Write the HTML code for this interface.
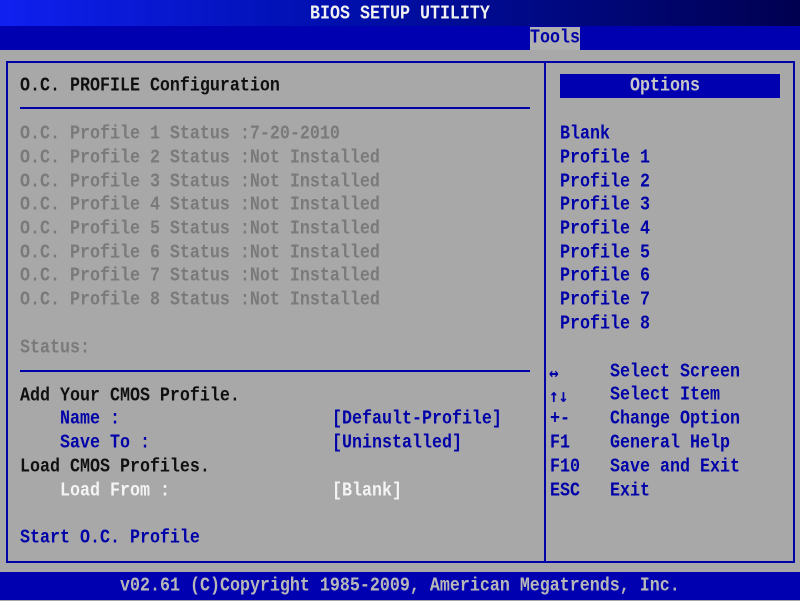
<!DOCTYPE html>
<html><head><meta charset="utf-8"><style>
*{margin:0;padding:0}
body{width:800px;height:600px;overflow:hidden;background:#a8a8a8;position:relative;font-family:"Liberation Mono","DejaVu Sans Mono",monospace;font-size:16.67px;}
.t{position:absolute;line-height:24px;height:24px;white-space:pre;font-weight:bold;transform:scaleY(1.15);transform-origin:left center;margin-top:2px}
.g{color:#7a7a7a}.b{color:#0000a8}.k{color:#101010}.w{color:#f4f4f4}
#top{position:absolute;left:0;top:0;width:800px;height:26px;background:linear-gradient(90deg,#1020f0 0%,#0010b0 40%,#000050 100%)}
#tab{position:absolute;left:0;top:26px;width:800px;height:24px;background:#0000b0}
#box{position:absolute;left:6px;top:61px;width:785px;height:498px;border:2px solid #0000a8}
#div{position:absolute;left:544px;top:61px;width:2px;height:500px;background:#0000a8}
.hl{position:absolute;height:2px;background:#0000a8;left:20px;width:510px}
#opt{position:absolute;left:560px;top:74px;width:220px;height:24px;background:#0000b0}
#bot{position:absolute;left:0;top:572px;width:800px;height:28px;background:#0000b0}
.ar{font-family:"DejaVu Sans Mono",monospace;font-size:16px}
</style></head><body>
<div id="top"></div>
<div class="t" style="left:310px;top:1px;color:#f0f0f0">BIOS SETUP UTILITY</div>
<div id="tab"></div>
<div style="position:absolute;left:530px;top:27px;width:50px;height:23px;background:#b0b0b0"></div>
<div class="t b" style="left:530px;top:25px">Tools</div>
<div id="box"></div><div id="div"></div>
<div class="hl" style="top:107px"></div>
<div class="hl" style="top:370px"></div>
<div id="opt"></div>
<div class="t" style="left:630px;top:73px;color:#c8c8c8">Options</div>
<div class="t k" style="left:20px;top:73px">O.C. PROFILE Configuration</div>
<div class="t g" style="left:20px;top:121px">O.C. Profile 1 Status :7-20-2010</div>
<div class="t g" style="left:20px;top:145px">O.C. Profile 2 Status :Not Installed</div>
<div class="t g" style="left:20px;top:169px">O.C. Profile 3 Status :Not Installed</div>
<div class="t g" style="left:20px;top:192px">O.C. Profile 4 Status :Not Installed</div>
<div class="t g" style="left:20px;top:216px">O.C. Profile 5 Status :Not Installed</div>
<div class="t g" style="left:20px;top:240px">O.C. Profile 6 Status :Not Installed</div>
<div class="t g" style="left:20px;top:263px">O.C. Profile 7 Status :Not Installed</div>
<div class="t g" style="left:20px;top:287px">O.C. Profile 8 Status :Not Installed</div>
<div class="t g" style="left:20px;top:335px">Status:</div>
<div class="t k" style="left:20px;top:383px">Add Your CMOS Profile.</div>
<div class="t b" style="left:60px;top:406px">Name :</div>
<div class="t b" style="left:332px;top:406px">[Default-Profile]</div>
<div class="t b" style="left:60px;top:430px">Save To :</div>
<div class="t b" style="left:332px;top:430px">[Uninstalled]</div>
<div class="t k" style="left:20px;top:454px">Load CMOS Profiles.</div>
<div class="t w" style="left:60px;top:478px">Load From :</div>
<div class="t w" style="left:332px;top:478px">[Blank]</div>
<div class="t b" style="left:20px;top:525px">Start O.C. Profile</div>
<div class="t b" style="left:560px;top:121px">Blank</div>
<div class="t b" style="left:560px;top:145px">Profile 1</div>
<div class="t b" style="left:560px;top:169px">Profile 2</div>
<div class="t b" style="left:560px;top:192px">Profile 3</div>
<div class="t b" style="left:560px;top:216px">Profile 4</div>
<div class="t b" style="left:560px;top:240px">Profile 5</div>
<div class="t b" style="left:560px;top:263px">Profile 6</div>
<div class="t b" style="left:560px;top:287px">Profile 7</div>
<div class="t b" style="left:560px;top:311px">Profile 8</div>
<div class="t b ar" style="left:549px;top:359px">↔</div>
<div class="t b ar" style="left:549px;top:382px">↑↓</div>
<div class="t b" style="left:550px;top:406px">+-</div>
<div class="t b" style="left:550px;top:430px">F1</div>
<div class="t b" style="left:550px;top:454px">F10</div>
<div class="t b" style="left:550px;top:478px">ESC</div>
<div class="t b" style="left:610px;top:359px">Select Screen</div>
<div class="t b" style="left:610px;top:382px">Select Item</div>
<div class="t b" style="left:610px;top:406px">Change Option</div>
<div class="t b" style="left:610px;top:430px">General Help</div>
<div class="t b" style="left:610px;top:454px">Save and Exit</div>
<div class="t b" style="left:610px;top:478px">Exit</div>
<div id="bot"></div>
<div class="t" style="left:120px;top:573px;color:#b8b8b8">v02.61 (C)Copyright 1985-2009, American Megatrends, Inc.</div>
</body></html>
